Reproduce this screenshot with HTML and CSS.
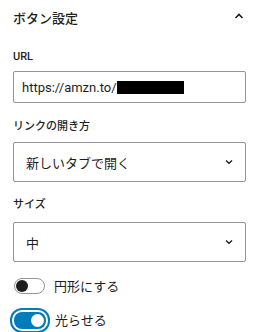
FILE: index.html
```html
<!DOCTYPE html>
<html lang="ja">
<head>
<meta charset="utf-8">
<link rel="stylesheet" href="styles.css">
</head>
<body>
<div class="panel">
  <div class="head">
    <span class="title">ボタン設定</span>
    <svg class="chev-up" width="12" height="8" viewBox="0 0 12 8"><path d="M2.5 6 L6 2.5 L9.5 6" fill="none" stroke="#1e1e1e" stroke-width="1.6"/></svg>
  </div>
  <div class="field f-url">
    <div class="label">URL</div>
    <div class="input"><span>https://amzn.to/</span><span class="redact"></span></div>
  </div>
  <div class="field f-open">
    <div class="label">リンクの開き方</div>
    <div class="select"><span>新しいタブで開く</span>
      <svg class="chev-down" width="10" height="6" viewBox="0 0 10 6"><path d="M2 1.5 L5 4.3 L8 1.5" fill="none" stroke="#1e1e1e" stroke-width="1.4"/></svg>
    </div>
  </div>
  <div class="field f-size">
    <div class="label">サイズ</div>
    <div class="select"><span>中</span>
      <svg class="chev-down" width="10" height="6" viewBox="0 0 10 6"><path d="M2 1.5 L5 4.3 L8 1.5" fill="none" stroke="#1e1e1e" stroke-width="1.4"/></svg>
    </div>
  </div>
  <div class="toggle-row t1">
    <span class="toggle off"><span class="knob"></span></span>
    <span class="tlabel">円形にする</span>
  </div>
  <div class="toggle-row t2">
    <span class="toggle on"><span class="knob"></span></span>
    <span class="tlabel">光らせる</span>
  </div>
</div>
</body>
</html>
```
FILE: styles.css
```css
* { box-sizing: border-box; }
html, body { margin: 0; padding: 0; background: #fff; }
body {
  font-family: Roboto, "Noto Sans CJK JP", sans-serif;
  color: #1e1e1e;
  width: 260px;
  height: 332px;
  overflow: hidden;
}
.panel { padding: 0 14px 0 13px; }
.head {
  height: 36px;
  display: flex;
  align-items: center;
  justify-content: space-between;
}
.title { font-size: 13px; font-weight: 500; line-height: 1; }
.chev-up { margin-right: 1px; margin-top: -5px; }
.label {
  font-size: 11px;
  font-weight: 500;
  line-height: 14px;
  height: 14px;
}
.f-url { margin-top: 14px; }
.f-url .label { margin-bottom: 7px; }
.input {
  height: 32px;
  border: 1px solid #949494;
  border-radius: 2px;
  display: flex;
  align-items: center;
  padding-left: 8px;
  font-size: 13px;
  background: #fff;
}
.redact {
  display: inline-block;
  width: 67px;
  height: 13px;
  background: #000;
  margin-top: 1px;
}
.f-open { margin-top: 17px; }
.f-open .label { margin-bottom: 8px; }
.f-size { margin-top: 16px; }
.f-size .label { margin-bottom: 10px; }
.select {
  height: 40px;
  border: 1px solid #949494;
  border-radius: 2px;
  display: flex;
  align-items: center;
  justify-content: space-between;
  padding: 0 11px 0 12px;
  font-size: 13px;
}
.toggle-row {
  display: flex;
  align-items: center;
  font-size: 13px;
}
.t1 { margin-top: 16px; height: 16px; }
.t2 { margin-top: 15px; height: 22px; }
.tlabel { margin-left: 9px; line-height: 1; }
.toggle {
  position: relative;
  display: inline-block;
  width: 31px;
  height: 16px;
  border-radius: 8px;
  margin-left: 1px;
}
.toggle.off { border: 1px solid #949494; background: #fff; }
.toggle.off .knob {
  position: absolute;
  left: 1px; top: 1px;
  width: 12px; height: 12px;
  border-radius: 50%;
  background: #1e1e1e;
}
.toggle.on {
  background: #007cba;
  box-shadow: 0 0 0 2px #fff, 0 0 0 4px #007cba;
  margin-left: 1px;
  width: 32px;
  height: 17px;
}
.toggle.on .knob {
  position: absolute;
  right: 2px; top: 2px;
  width: 13px; height: 13px;
  border-radius: 50%;
  background: #fff;
}
.t2 .tlabel { margin-left: 9px; }
```
